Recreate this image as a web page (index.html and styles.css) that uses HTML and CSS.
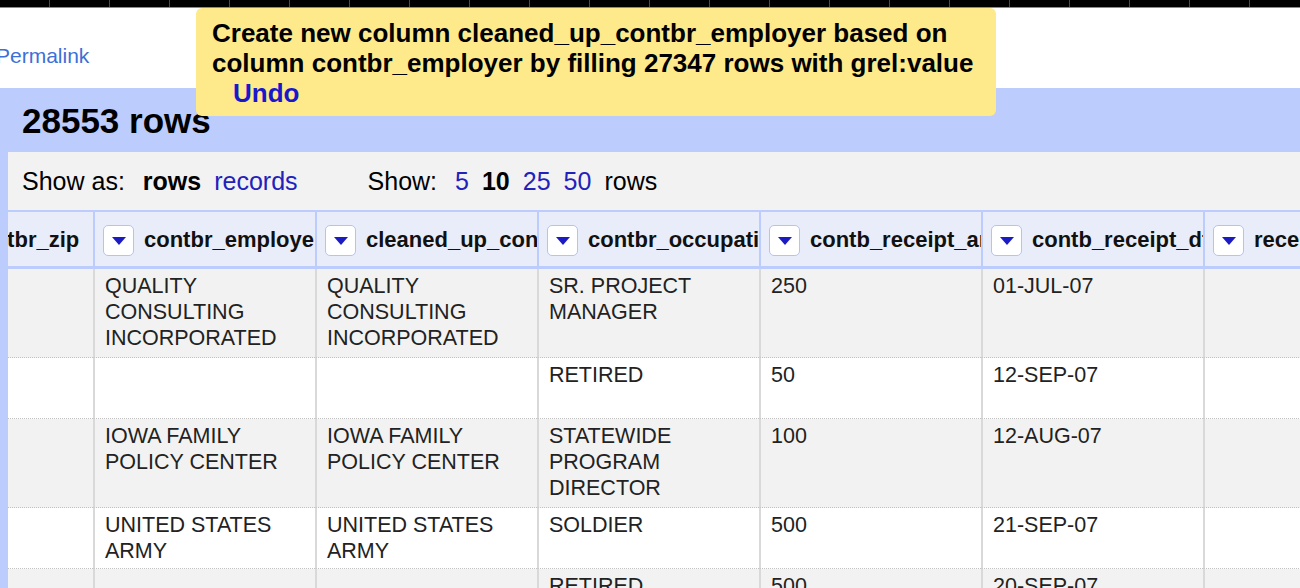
FILE: index.html
```html
<!DOCTYPE html>
<html lang="en">
<head>
<meta charset="utf-8">
<title>OpenRefine</title>
<link rel="stylesheet" href="styles.css">
</head>
<body>
<div class="topbar"></div>
<div class="header"><a class="permalink" href="#">Permalink</a></div>
<div class="view">
  <h1 class="title">28553 rows</h1>
  <div class="data">
    <div class="controls">
      <div class="group"><span class="label">Show as:</span><b class="opt">rows</b><a class="opt link" href="#">records</a></div>
      <div class="group gap"><span class="label">Show:</span><a class="opt link" href="#">5</a><b class="opt">10</b><a class="opt link" href="#">25</a><a class="opt link" href="#">50</a><span class="opt">rows</span></div>
    </div>
    <div class="grid-wrap">
      <table class="grid">
        <thead>
          <tr>
            <th class="c0"><div class="th"><span class="menu"><svg viewBox="0 0 14 8"><path d="M0 0H14L7 8Z"/></svg></span><span class="name">contbr_zip</span></div></th>
            <th class="cw"><div class="th"><span class="menu"><svg viewBox="0 0 14 8"><path d="M0 0H14L7 8Z"/></svg></span><span class="name">contbr_employer</span></div></th>
            <th class="cw"><div class="th"><span class="menu"><svg viewBox="0 0 14 8"><path d="M0 0H14L7 8Z"/></svg></span><span class="name">cleaned_up_contbr_employer</span></div></th>
            <th class="cw"><div class="th"><span class="menu"><svg viewBox="0 0 14 8"><path d="M0 0H14L7 8Z"/></svg></span><span class="name">contbr_occupation</span></div></th>
            <th class="cw"><div class="th"><span class="menu"><svg viewBox="0 0 14 8"><path d="M0 0H14L7 8Z"/></svg></span><span class="name">contb_receipt_amt</span></div></th>
            <th class="cw"><div class="th"><span class="menu"><svg viewBox="0 0 14 8"><path d="M0 0H14L7 8Z"/></svg></span><span class="name">contb_receipt_dt</span></div></th>
            <th class="cw"><div class="th"><span class="menu"><svg viewBox="0 0 14 8"><path d="M0 0H14L7 8Z"/></svg></span><span class="name">receipt_desc</span></div></th>
          </tr>
        </thead>
        <tbody>
          <tr class="odd h3">
            <td></td>
            <td>QUALITY CONSULTING INCORPORATED</td>
            <td>QUALITY CONSULTING INCORPORATED</td>
            <td>SR. PROJECT MANAGER</td>
            <td>250</td>
            <td>01-JUL-07</td>
            <td></td>
          </tr>
          <tr class="even h2">
            <td></td>
            <td></td>
            <td></td>
            <td>RETIRED</td>
            <td>50</td>
            <td>12-SEP-07</td>
            <td></td>
          </tr>
          <tr class="odd h3">
            <td></td>
            <td>IOWA FAMILY POLICY CENTER</td>
            <td>IOWA FAMILY POLICY CENTER</td>
            <td>STATEWIDE PROGRAM DIRECTOR</td>
            <td>100</td>
            <td>12-AUG-07</td>
            <td></td>
          </tr>
          <tr class="even h2">
            <td></td>
            <td>UNITED STATES ARMY</td>
            <td>UNITED STATES ARMY</td>
            <td>SOLDIER</td>
            <td>500</td>
            <td>21-SEP-07</td>
            <td></td>
          </tr>
          <tr class="odd h2">
            <td></td>
            <td></td>
            <td></td>
            <td>RETIRED</td>
            <td>500</td>
            <td>20-SEP-07</td>
            <td></td>
          </tr>
        </tbody>
      </table>
    </div>
  </div>
</div>
<div class="notice">
  <div class="msg">Create new column cleaned_up_contbr_employer based on column contbr_employer by filling 27347 rows with grel:value</div>
  <div class="undo-line"><a class="undo" href="#">Undo</a></div>
</div>
</body>
</html>
```
FILE: styles.css
```css
html, body {
  margin: 0;
  padding: 0;
  overflow: hidden;
  height: 100%;
  background: #fff;
}
body {
  font-family: "Liberation Sans", Arial, Helvetica, sans-serif;
  color: #000;
}
a { text-decoration: none; }

.topbar {
  height: 7px;
  background-color: #000;
  background-image: repeating-linear-gradient(90deg, transparent 0 59px, #4a4a4a 59px 60px);
  background-position: -10px 0;
  border-bottom: 1px solid #8a8a8a;
}

.header {
  height: 80px;
  box-sizing: border-box;
  padding-top: 36px;
}
.permalink {
  display: inline-block;
  margin-left: -4px;
  font-size: 21px;
  line-height: 24px;
  color: #3d6fd8;
}

.view {
  background: #bbccfd;
  padding-left: 8px;
  height: 500px;
}
.title {
  margin: 0;
  padding: 13px 14px 11px;
  font-size: 35px;
  line-height: 40px;
  font-weight: bold;
}

.data {
  background: #f2f2f2;
  height: 100%;
}
.controls {
  display: flex;
  align-items: baseline;
  padding: 15px 14px;
  font-size: 25px;
  line-height: 28px;
}
.group {
  display: flex;
  align-items: baseline;
}
.group.gap { margin-left: 57px; }
.label { margin-right: 18px; }
.opt { margin-right: 13px; }
.link { color: #2222bb; }

.grid-wrap {
  overflow: hidden;
}
.grid {
  margin-left: -91px;
  table-layout: fixed;
  width: 1508px;
  border-collapse: separate;
  border-spacing: 0;
}
.grid th {
  box-sizing: border-box;
  padding: 0;
  background: #e9edfa;
  border-left: 2px solid #bbccfd;
  border-top: 2px solid #bbccfd;
  border-bottom: 3px solid #bbccfd;
  text-align: left;
}
.grid th.c0 { width: 176px; }
.grid th.cw { width: 222px; }
.th {
  display: flex;
  align-items: center;
  gap: 10px;
  height: 54px;
  padding-left: 8px;
  padding-top: 2px;
  box-sizing: border-box;
  overflow: hidden;
  white-space: nowrap;
}
.menu {
  flex: none;
  width: 31px;
  height: 31px;
  box-sizing: border-box;
  border: 1px solid #b3c3f5;
  border-radius: 5px;
  background: #fff;
  display: flex;
  align-items: center;
  justify-content: center;
}
.menu svg {
  width: 14px;
  height: 8px;
  fill: #1b1bc4;
  display: block;
  margin-top: 1px;
}
.name {
  font-size: 22px;
  font-weight: bold;
  color: #111;
}

.grid td {
  box-sizing: border-box;
  vertical-align: top;
  padding: 4px 10px 4px;
  border-left: 2px solid #d9d9d9;
  border-bottom: 1px dotted #c2c2c2;
  font-size: 21.5px;
  line-height: 26px;
  color: #222;
}
.grid tr.odd td { background: #f2f2f2; }
.grid tr.even td { background: #fff; }
.grid tr.h3 { height: 89px; }
.grid tr.h2 { height: 61px; }

.notice {
  position: absolute;
  top: 8px;
  left: 196px;
  width: 800px;
  box-sizing: border-box;
  padding: 10px 16px 8px;
  background: #fee98b;
  border-radius: 6px;
  font-size: 26px;
  line-height: 30px;
  font-weight: bold;
  color: #000;
}
.undo-line { padding-left: 21px; }
.undo { color: #1818cc; }
```
